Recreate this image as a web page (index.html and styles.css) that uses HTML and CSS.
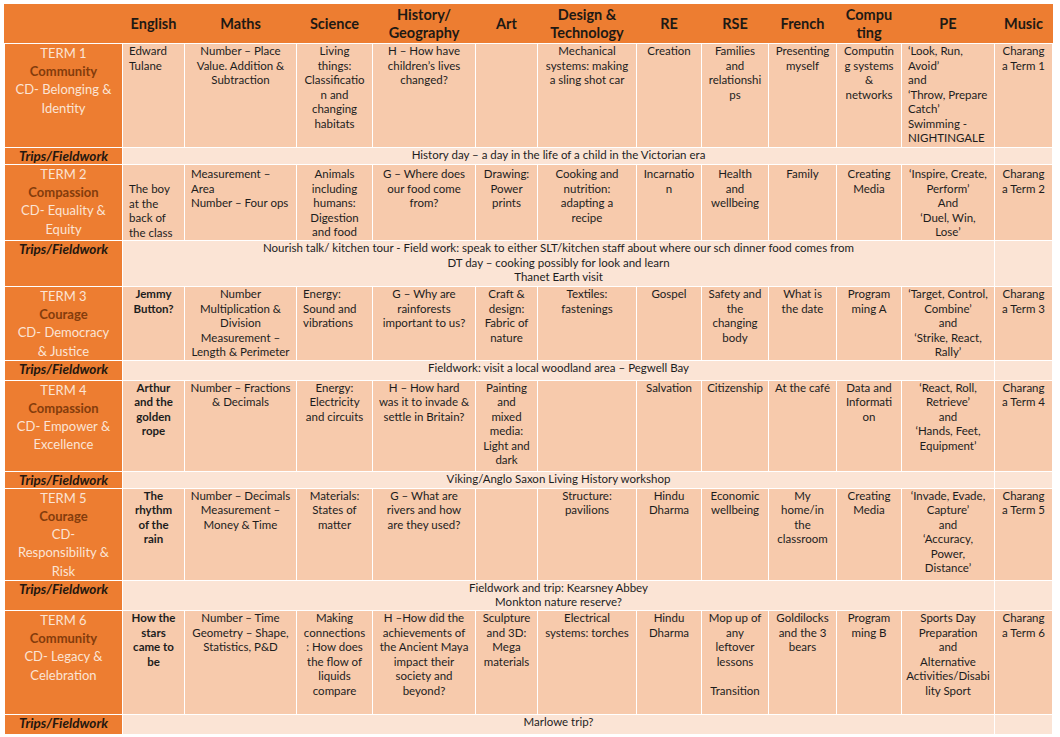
FILE: index.html
```html
<!DOCTYPE html>
<html lang="en">
<head>
<meta charset="utf-8">
<title>Curriculum Overview</title>
<link rel="stylesheet" href="styles.css">
</head>
<body>
<table class="plan">
  <colgroup>
    <col class="w-lab"><col class="w-eng"><col class="w-mat"><col class="w-sci"><col class="w-his"><col class="w-art"><col class="w-dt"><col class="w-re"><col class="w-rse"><col class="w-fr"><col class="w-com"><col class="w-pe"><col class="w-mus">
  </colgroup>
  <tr class="hdr">
    <th></th><th>English</th><th>Maths</th><th>Science</th><th>History/<br>Geography</th><th>Art</th><th>Design &amp;<br>Technology</th><th>RE</th><th>RSE</th><th>French</th><th>Compu<br>ting</th><th>PE</th><th>Music</th>
  </tr>

  <tr class="term r1">
    <td class="lab">TERM 1<br><b>Community</b><br>CD- Belonging &amp;<br>Identity</td>
    <td class="left">Edward<br>Tulane</td>
    <td>Number – Place<br>Value. Addition &amp;<br>Subtraction</td>
    <td>Living<br>things:<br>Classificatio<br>n and<br>changing<br>habitats</td>
    <td>H – How have<br>children’s lives<br>changed?</td>
    <td></td>
    <td>Mechanical<br>systems: making<br>a sling shot car</td>
    <td>Creation</td>
    <td>Families<br>and<br>relationshi<br>ps</td>
    <td>Presenting<br>myself</td>
    <td>Computin<br>g systems<br>&amp;<br>networks</td>
    <td class="left">‘Look, Run,<br>Avoid’<br>and<br>‘Throw, Prepare<br>Catch’<br>Swimming -<br>NIGHTINGALE</td>
    <td>Charang<br>a Term 1</td>
  </tr>
  <tr class="trip t1">
    <td class="lab">Trips/Fieldwork</td>
    <td colspan="11">History day – a day in the life of a child in the Victorian era</td>
    <td></td>
  </tr>

  <tr class="term r2">
    <td class="lab">TERM 2<br><b>Compassion</b><br>CD- Equality &amp;<br>Equity</td>
    <td class="left bottom">The boy<br>at the<br>back of<br>the class</td>
    <td class="left">Measurement –<br>Area<br>Number – Four ops</td>
    <td>Animals<br>including<br>humans:<br>Digestion<br>and food</td>
    <td>G – Where does<br>our food come<br>from?</td>
    <td>Drawing:<br>Power<br>prints</td>
    <td>Cooking and<br>nutrition:<br>adapting a<br>recipe</td>
    <td>Incarnatio<br>n</td>
    <td>Health<br>and<br>wellbeing</td>
    <td>Family</td>
    <td>Creating<br>Media</td>
    <td>‘Inspire, Create,<br>Perform’<br>And<br>‘Duel, Win,<br>Lose’</td>
    <td>Charang<br>a Term 2</td>
  </tr>
  <tr class="trip t2">
    <td class="lab">Trips/Fieldwork</td>
    <td colspan="11">Nourish talk/ kitchen tour - Field work: speak to either SLT/kitchen staff about where our sch dinner food comes from<br>DT day – cooking possibly for look and learn<br>Thanet Earth visit</td>
    <td></td>
  </tr>

  <tr class="term r3">
    <td class="lab">TERM 3<br><b>Courage</b><br>CD- Democracy<br>&amp; Justice</td>
    <td class="bold">Jemmy<br>Button?</td>
    <td>Number<br>Multiplication &amp;<br>Division<br>Measurement –<br>Length &amp; Perimeter</td>
    <td class="left">Energy:<br>Sound and<br>vibrations</td>
    <td>G – Why are<br>rainforests<br>important to us?</td>
    <td>Craft &amp;<br>design:<br>Fabric of<br>nature</td>
    <td>Textiles:<br>fastenings</td>
    <td>Gospel</td>
    <td>Safety and<br>the<br>changing<br>body</td>
    <td>What is<br>the date</td>
    <td>Program<br>ming A</td>
    <td>‘Target, Control,<br>Combine’<br>and<br>‘Strike, React,<br>Rally’</td>
    <td>Charang<br>a Term 3</td>
  </tr>
  <tr class="trip t3">
    <td class="lab">Trips/Fieldwork</td>
    <td colspan="11">Fieldwork: visit a local woodland area – Pegwell Bay</td>
    <td></td>
  </tr>

  <tr class="term r4">
    <td class="lab">TERM 4<br><b>Compassion</b><br>CD- Empower &amp;<br>Excellence</td>
    <td class="bold">Arthur<br>and the<br>golden<br>rope</td>
    <td>Number – Fractions<br>&amp; Decimals</td>
    <td>Energy:<br>Electricity<br>and circuits</td>
    <td>H – How hard<br>was it to invade &amp;<br>settle in Britain?</td>
    <td>Painting<br>and<br>mixed<br>media:<br>Light and<br>dark</td>
    <td></td>
    <td>Salvation</td>
    <td>Citizenship</td>
    <td>At the café</td>
    <td>Data and<br>Informati<br>on</td>
    <td>‘React, Roll,<br>Retrieve’<br>and<br>‘Hands, Feet,<br>Equipment’</td>
    <td>Charang<br>a Term 4</td>
  </tr>
  <tr class="trip t4">
    <td class="lab">Trips/Fieldwork</td>
    <td colspan="11">Viking/Anglo Saxon Living History workshop</td>
    <td></td>
  </tr>

  <tr class="term r5">
    <td class="lab">TERM 5<br><b>Courage</b><br>CD-<br>Responsibility &amp;<br>Risk</td>
    <td class="bold">The<br>rhythm<br>of the<br>rain</td>
    <td>Number – Decimals<br>Measurement –<br>Money &amp; Time</td>
    <td>Materials:<br>States of<br>matter</td>
    <td>G – What are<br>rivers and how<br>are they used?</td>
    <td></td>
    <td>Structure:<br>pavilions</td>
    <td>Hindu<br>Dharma</td>
    <td>Economic<br>wellbeing</td>
    <td>My<br>home/in<br>the<br>classroom</td>
    <td>Creating<br>Media</td>
    <td>‘Invade, Evade,<br>Capture’<br>and<br>‘Accuracy,<br>Power,<br>Distance’</td>
    <td>Charang<br>a Term 5</td>
  </tr>
  <tr class="trip t5">
    <td class="lab">Trips/Fieldwork</td>
    <td colspan="11">Fieldwork and trip: Kearsney Abbey<br>Monkton nature reserve?</td>
    <td></td>
  </tr>

  <tr class="term r6">
    <td class="lab">TERM 6<br><b>Community</b><br>CD- Legacy &amp;<br>Celebration</td>
    <td class="bold">How the<br>stars<br>came to<br>be</td>
    <td>Number – Time<br>Geometry – Shape,<br>Statistics, P&amp;D</td>
    <td>Making<br>connections<br>: How does<br>the flow of<br>liquids<br>compare</td>
    <td>H –How did the<br>achievements of<br>the Ancient Maya<br>impact their<br>society and<br>beyond?</td>
    <td>Sculpture<br>and 3D:<br>Mega<br>materials</td>
    <td>Electrical<br>systems: torches</td>
    <td>Hindu<br>Dharma</td>
    <td>Mop up of<br>any<br>leftover<br>lessons<br><br>Transition</td>
    <td>Goldilocks<br>and the 3<br>bears</td>
    <td>Program<br>ming B</td>
    <td>Sports Day<br>Preparation<br>and<br>Alternative<br>Activities/Disabi<br>lity Sport</td>
    <td>Charang<br>a Term 6</td>
  </tr>
  <tr class="trip t6">
    <td class="lab">Trips/Fieldwork</td>
    <td colspan="11">Marlowe trip?</td>
    <td></td>
  </tr>
</table>
</body>
</html>
```

FILE: styles.css
```css
html, body {
  margin: 0;
  background: #ffffff;
}

body {
  padding: 4px;
  font-family: Lato, "Liberation Sans", Arial, sans-serif;
  color: #1d1d1d;
}

.plan {
  border-collapse: collapse;
  table-layout: fixed;
  width: 1048px;
}

.w-lab { width: 118px; }
.w-eng { width: 62px; }
.w-mat { width: 112px; }
.w-sci { width: 76px; }
.w-his { width: 103px; }
.w-art { width: 62px; }
.w-dt  { width: 99px; }
.w-re  { width: 65px; }
.w-rse { width: 67px; }
.w-fr  { width: 68px; }
.w-com { width: 65px; }
.w-pe  { width: 93px; }
.w-mus { width: 58px; }

.plan td,
.plan th {
  border: 1px solid #ffffff;
  padding: 0 3px;
  vertical-align: top;
  text-align: center;
  white-space: nowrap;
  font-size: 11.5px;
  line-height: 14.5px;
  font-weight: 400;
}

/* header */
.hdr { height: 39px; }
.hdr th {
  background: #ed7d31;
  border-color: #ed7d31;
  border-bottom-color: #ffffff;
  vertical-align: middle;
  font-size: 14.5px;
  line-height: 18.5px;
  font-weight: 700;
  color: #1e1914;
}

/* term rows */
.term td { background: #f7caac; }
.term .lab,
.trip .lab {
  background: #ed7d31;
  color: #fbe4d5;
  font-size: 13px;
  line-height: 18.2px;
  padding: 0 2px;
}
.lab b {
  color: #843c0c;
  font-weight: 700;
}

.trip td {
  background: #fbe4d5;
  line-height: 14.6px;
}
.trip .lab {
  color: #24170f;
  font-weight: 700;
  font-style: italic;
  font-size: 13.5px;
  line-height: 16px;
}

.left { text-align: left !important; padding-left: 6px !important; }
.bottom { vertical-align: bottom !important; }
.bold { font-weight: 700 !important; }

.r2 td { padding-top: 2px; }

.r1 { height: 104px; }
.t1 { height: 17px; }
.r2 { height: 76px; }
.t2 { height: 46px; }
.r3 { height: 73px; }
.t3 { height: 20px; }
.r4 { height: 91px; }
.t4 { height: 17px; }
.r5 { height: 92px; }
.t5 { height: 29px; }
.r6 { height: 104px; }
.t6 { height: 20px; }
```
